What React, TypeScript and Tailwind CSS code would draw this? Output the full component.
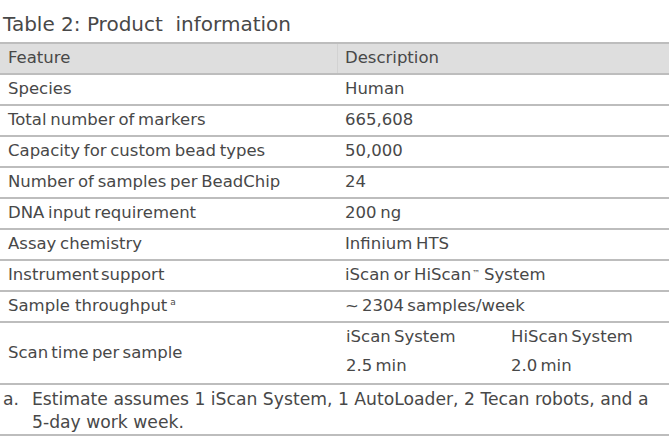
const rows: [string, string][] = [
  ["Species", "Human"],
  ["Total number of markers", "665,608"],
  ["Capacity for custom bead types", "50,000"],
  ["Number of samples per BeadChip", "24"],
  ["DNA input requirement", "200 ng"],
  ["Assay chemistry", "Infinium HTS"],
];

const App = () => {
  return (
    <div className="w-[669px] h-[447px] bg-white text-[#484848] font-['DejaVu_Sans',sans-serif] overflow-hidden">
      <div className="h-[42px] pl-[3px] pt-[12px] text-[20px] leading-[24px] whitespace-pre">Table 2: Product  information</div>
      <div className="border-t-2 border-[#bdbdbd] text-[16.5px]">
        <div className="grid grid-cols-[338px_1fr] h-[31px] bg-[#dedede] border-b-2 border-[#bdbdbd]">
          <div className="pl-[8px] flex items-center border-r border-[#d2d2d2]">Feature</div>
          <div className="pl-[7px] flex items-center">Description</div>
        </div>
        {rows.map(([f, d]) => (
          <div key={f} className="grid grid-cols-[338px_1fr] h-[31px] border-b-2 border-[#bdbdbd]">
            <div className="pl-[8px] flex items-center [word-spacing:-1.5px]">{f}</div>
            <div className="pl-[7px] flex items-center [word-spacing:-1.5px]">{d}</div>
          </div>
        ))}
        <div className="grid grid-cols-[338px_1fr] h-[31px] border-b-2 border-[#bdbdbd]">
          <div className="pl-[8px] flex items-center [word-spacing:-3px]">Instrument support</div>
          <div className="pl-[7px] flex items-center [word-spacing:-1.5px]">
            iScan or HiScan<sup className="text-[8px] relative -top-[2px] ml-[1px]">™</sup>&nbsp;System
          </div>
        </div>
        <div className="grid grid-cols-[338px_1fr] h-[31px] border-b-2 border-[#bdbdbd]">
          <div className="pl-[8px] flex items-center">
            Sample throughput<sup className="text-[9px] ml-[3px]">a</sup>
          </div>
          <div className="pl-[7px] flex items-center [word-spacing:-2px]">~ 2304 samples/week</div>
        </div>
        <div className="grid grid-cols-[338px_1fr] h-[62px] border-b-2 border-[#bdbdbd]">
          <div className="pl-[8px] flex items-center [word-spacing:-2px]">Scan time per sample</div>
          <div className="grid grid-cols-[165px_1fr] grid-rows-2 pl-[8px] pb-[2px] [word-spacing:-2px]">
            <div className="flex items-center">iScan System</div>
            <div className="flex items-center">HiScan System</div>
            <div className="flex items-center">2.5 min</div>
            <div className="flex items-center">2.0 min</div>
          </div>
        </div>
        <div className="h-[51px] border-b-2 border-[#bdbdbd] grid grid-cols-[29px_1fr] pl-[3px] pt-[3px] text-[17.2px] leading-[23px] whitespace-nowrap">
          <span>a.</span>
          <div>
            <div>Estimate assumes 1 iScan System, 1 AutoLoader, 2 Tecan robots, and a</div>
            <div>5-day work week.</div>
          </div>
        </div>
      </div>
    </div>
  );
};

export default App;
